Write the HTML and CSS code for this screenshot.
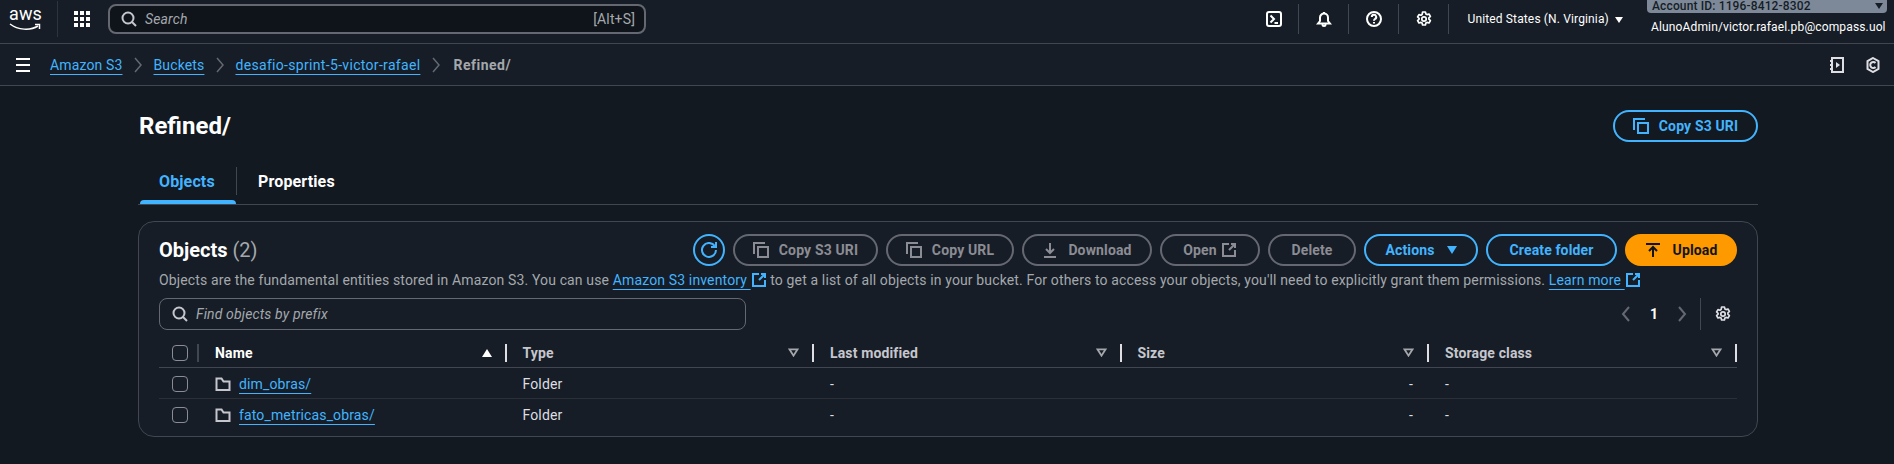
FILE: index.html
```html
<!DOCTYPE html>
<html lang="en">
<head>
  <meta charset="UTF-8">
  <title>Refined/ - S3 bucket</title>
  <link rel="stylesheet" href="styles.css">
</head>
<body>

<svg class="sprite" width="0" height="0">
  <symbol id="i-copy" viewBox="0 0 16 16"><path d="M1 12V1h11"/><rect x="5" y="5" width="10" height="10"/></symbol>
  <symbol id="i-ext" viewBox="0 0 16 16"><path d="M14 8v6H2V2h6"/><path d="M10 2h4v4M14 2L8 8"/></symbol>
  <symbol id="i-download" viewBox="0 0 16 16"><path d="M8 1v10M4 7l4 4 4-4M2 15h12"/></symbol>
  <symbol id="i-upload" viewBox="0 0 16 16"><path d="M1 2h14M8 15V5M4 9l4-4 4 4"/></symbol>
  <symbol id="i-refresh" viewBox="0 0 16 16"><path d="M10 5h5V0"/><path d="M15 8a7 7 0 1 1-1.300-4.100"/></symbol>
  <symbol id="i-gear" viewBox="0 0 16 16"><path d="M6.600 1h2.800l.5 2 1.100.6 2-.6 1.400 2.400-1.500 1.400v1.400l1.500 1.400-1.400 2.400-2-.6-1.100.6-.5 2H6.600l-.5-2-1.100-.6-2 .6-1.400-2.400 1.500-1.400V7.400L1.600 6 3 3.600l2 .6 1.100-.6z"/><circle cx="8" cy="8" r="2.200"/></symbol>
  <symbol id="i-folder" viewBox="0 0 16 16"><path d="M1.500 14V2.500h5l2 3h6V14z"/></symbol>
  <symbol id="i-chev" viewBox="0 0 16 16"><path d="M5 1l6 7-6 7"/></symbol>
  <symbol id="i-sort" viewBox="0 0 12 10"><path d="M1.500 1.500h9L6 8.500z"/></symbol>
</svg>

<header class="topbar">
  <div class="aws-logo">
    <span class="aws-word">aws</span>
    <svg class="aws-smile" viewBox="0 0 32 9"><path d="M1 1c8 6 20 7 28 2"/><path d="M26 1.500h4.500V6"/></svg>
  </div>
  <div class="apps-grid">
    <i></i><i></i><i></i><i></i><i></i><i></i><i></i><i></i><i></i>
  </div>
  <div class="search-box">
    <svg class="icon search-icon" viewBox="0 0 16 16"><circle cx="7" cy="7" r="5.500"/><path d="M15 15l-4-4"/></svg>
    <span class="search-text">Search</span>
    <span class="search-key">[Alt+S]</span>
  </div>

  <div class="top-right">
    <div class="top-slot">
      <svg class="icon" viewBox="0 0 16 16"><rect x="1" y="1" width="14" height="14" rx="2"/><path d="M4.500 4.500L8 8l-3.500 3.500M8.500 12H12"/></svg>
    </div>
    <div class="top-slot">
      <svg class="icon" viewBox="0 0 16 16"><path d="M8 2.500a4 4 0 0 0-4 4V10l-2 2.500h12L12 10V6.500a4 4 0 0 0-4-4zM8 1v1.500M6.500 13v.500a1.500 1.500 0 0 0 3 0V13"/></svg>
    </div>
    <div class="top-slot">
      <svg class="icon" viewBox="0 0 16 16"><circle cx="8" cy="8" r="7"/><path d="M5.800 6a2.200 2.200 0 1 1 3.300 1.900c-.7.400-1.100.9-1.100 1.900M8 11v1.500"/></svg>
    </div>
    <div class="top-slot">
      <svg class="icon icon-gear"><use href="#i-gear"/></svg>
    </div>
    <div class="region">United States (N. Virginia) <span class="caret-sm"></span></div>
    <div class="account">
      <div class="account-id">Account ID: 1196-8412-8302 <span class="caret-dark"></span></div>
      <div class="account-user">AlunoAdmin/victor.rafael.pb@compass.uol</div>
    </div>
  </div>
</header>

<nav class="crumbbar">
  <div class="hamburger"><i></i><i></i><i></i></div>
  <a class="crumb">Amazon S3</a>
  <svg class="icon crumb-sep"><use href="#i-chev"/></svg>
  <a class="crumb">Buckets</a>
  <svg class="icon crumb-sep"><use href="#i-chev"/></svg>
  <a class="crumb crumb-long">desafio-sprint-5-victor-rafael</a>
  <svg class="icon crumb-sep"><use href="#i-chev"/></svg>
  <span class="crumb-current">Refined/</span>
  <div class="crumb-tools">
    <svg class="icon" viewBox="0 0 16 16"><path d="M3 1h11v14H3zM1 4h3M1 8h3M1 12h3"/><path class="solid" d="M7 5l4 3-4 3z"/></svg>
    <svg class="icon" viewBox="0 0 16 16"><path d="M8 1l5.500 3.200v7.600L8 15l-5.500-3.200V4.200z"/><path d="M10.500 6A3 3 0 1 0 10.500 10"/></svg>
  </div>
</nav>

<main class="page">
  <div class="page-head">
    <h1>Refined/</h1>
    <button class="btn btn-blue head-copy"><svg class="icon"><use href="#i-copy"/></svg>Copy S3 URI</button>
  </div>

  <div class="tabs">
    <div class="tab tab-active"><span class="tab-label">Objects</span><span class="tab-bar"></span></div>
    <div class="tab tab-second"><span class="tab-label">Properties</span></div>
  </div>

  <section class="card">
    <div class="card-head">
      <h2>Objects <span class="count">(2)</span></h2>
      <div class="actions">
        <button class="btn btn-blue btn-round"><svg class="icon"><use href="#i-refresh"/></svg></button>
        <button class="btn btn-off w-copyuri"><svg class="icon"><use href="#i-copy"/></svg>Copy S3 URI</button>
        <button class="btn btn-off w-copyurl"><svg class="icon"><use href="#i-copy"/></svg>Copy URL</button>
        <button class="btn btn-off w-download"><svg class="icon"><use href="#i-download"/></svg>Download</button>
        <button class="btn btn-off w-open">Open<svg class="icon"><use href="#i-ext"/></svg></button>
        <button class="btn btn-off w-delete">Delete</button>
        <button class="btn btn-blue w-actions">Actions<span class="caret-blue"></span></button>
        <button class="btn btn-blue w-create">Create folder</button>
        <button class="btn btn-upload"><svg class="icon"><use href="#i-upload"/></svg>Upload</button>
      </div>
    </div>

    <p class="desc">Objects are the fundamental entities stored in Amazon S3. You can use <a>Amazon S3 inventory </a><svg class="icon ext-link"><use href="#i-ext"/></svg> to get a list of all objects in your bucket. For others to access your objects, you'll need to explicitly grant them permissions. <a>Learn more </a><svg class="icon ext-link"><use href="#i-ext"/></svg></p>

    <div class="filter-row">
      <div class="filter">
        <svg class="icon search-icon" viewBox="0 0 16 16"><circle cx="7" cy="7" r="5.500"/><path d="M15 15l-4-4"/></svg>
        <span>Find objects by prefix</span>
      </div>
      <div class="pager">
        <svg class="icon pager-chev flip"><use href="#i-chev"/></svg>
        <span class="pager-num">1</span>
        <svg class="icon pager-chev"><use href="#i-chev"/></svg>
        <span class="pager-div"></span>
        <svg class="icon pager-gear icon-gear"><use href="#i-gear"/></svg>
      </div>
    </div>

    <div class="table">
      <div class="tr th-row">
        <div class="td-check"><span class="checkbox"></span><span class="check-div"></span></div>
        <div class="th th-first">Name<span class="sort-up"></span></div>
        <div class="th">Type<svg class="sort-off"><use href="#i-sort"/></svg></div>
        <div class="th">Last modified<svg class="sort-off"><use href="#i-sort"/></svg></div>
        <div class="th">Size<svg class="sort-off"><use href="#i-sort"/></svg></div>
        <div class="th">Storage class<svg class="sort-off"><use href="#i-sort"/></svg></div>
      </div>
      <div class="tr row">
        <div class="td-check"><span class="checkbox"></span></div>
        <div class="td td-name"><svg class="icon folder"><use href="#i-folder"/></svg><a>dim_obras/</a></div>
        <div class="td">Folder</div>
        <div class="td">-</div>
        <div class="td td-size">-</div>
        <div class="td">-</div>
      </div>
      <div class="tr row">
        <div class="td-check"><span class="checkbox"></span></div>
        <div class="td td-name"><svg class="icon folder"><use href="#i-folder"/></svg><a>fato_metricas_obras/</a></div>
        <div class="td">Folder</div>
        <div class="td">-</div>
        <div class="td td-size">-</div>
        <div class="td">-</div>
      </div>
    </div>
  </section>
</main>

</body>
</html>
```

FILE: styles.css
```css
* {
  box-sizing: border-box;
}

body {
  margin: 0;
  height: 464px;
  overflow: hidden;
  background: #131920;
  color: #dedee3;
  font-family: Roboto, "Noto Sans", sans-serif;
  font-size: 14px;
  letter-spacing: 0.14px;
}

.sprite {
  position: absolute;
}

.icon {
  width: 16px;
  height: 16px;
  flex: none;
  fill: none;
  stroke: currentColor;
  stroke-width: 2;
}

.icon-gear {
  stroke-width: 1.700;
  stroke-linejoin: round;
}

.icon .solid {
  fill: currentColor;
  stroke: none;
}

a {
  color: #42b4ff;
  text-decoration: underline;
  text-underline-offset: 4px;
}

/* top bar */
.topbar {
  display: flex;
  align-items: center;
  height: 44px;
  background: #161d26;
  border-bottom: 1px solid #424650;
  color: #fff;
}

.aws-logo {
  width: 58px;
  height: 36px;
  margin-top: -6px;
  padding-left: 9px;
  border-right: 1px solid #2f343c;
}

.aws-word {
  display: block;
  font-size: 18px;
  line-height: 18px;
  margin-top: 4px;
}

.aws-smile {
  display: block;
  width: 32px;
  height: 9px;
  fill: none;
  stroke: #fff;
  stroke-width: 1.500;
}

.apps-grid {
  display: grid;
  grid-template-columns: repeat(3, 4px);
  gap: 2px;
  margin-left: 16px;
  margin-top: -6px;
}

.apps-grid i {
  width: 4px;
  height: 4px;
  background: #fff;
}

.search-box {
  display: flex;
  align-items: center;
  width: 538px;
  height: 30px;
  margin-left: 18px;
  margin-top: -6px;
  padding: 0 9px 0 11px;
  background: #0f141a;
  border: 2px solid #656871;
  border-radius: 8px;
  color: #a4a8ad;
}

.search-icon {
  color: #c6c6cd;
}

.search-text {
  margin-left: 8px;
  font-style: italic;
}

.search-key {
  margin-left: auto;
}

.top-right {
  display: flex;
  align-items: center;
  margin-left: auto;
  padding-right: 7px;
  height: 100%;
}

.top-slot {
  display: flex;
  align-items: center;
  justify-content: center;
  width: 50px;
  height: 30px;
  margin-top: -6px;
  border-right: 1px solid #424650;
}

.region {
  margin-left: 18px;
  margin-right: 24px;
  margin-top: -5px;
  font-size: 12px;
  white-space: nowrap;
}

.caret-sm {
  display: inline-block;
  border-left: 4px solid transparent;
  border-right: 4px solid transparent;
  border-top: 6px solid #fff;
  margin-left: 3px;
}

.account {
  width: 240px;
  height: 100%;
}

.account-id {
  display: flex;
  justify-content: space-between;
  align-items: center;
  height: 13px;
  padding: 0 4px 2px 5px;
  background: #7d8998;
  border-radius: 0 0 4px 4px;
  color: #161d26;
  font-size: 12px;
  font-weight: 500;
}

.caret-dark {
  border-left: 4px solid transparent;
  border-right: 4px solid transparent;
  border-top: 6px solid #161d26;
}

.account-user {
  margin-top: 6px;
  padding-left: 4px;
  font-size: 12px;
  line-height: 16px;
  white-space: nowrap;
}

/* breadcrumbs */
.crumbbar {
  display: flex;
  align-items: center;
  height: 42px;
  padding: 0 13px 0 16px;
  background: #161d26;
  border-bottom: 1px solid #424650;
}

.hamburger {
  display: flex;
  flex-direction: column;
  gap: 4px;
  width: 14px;
  margin-right: 20px;
}

.hamburger i {
  height: 2px;
  background: #fff;
}

.crumb {
  color: #42b4ff;
  text-decoration: underline;
  text-underline-offset: 4px;
  white-space: nowrap;
}

.crumb-long {
  letter-spacing: 0.320px;
}

.crumb-sep {
  margin: 0 7.500px;
  color: #656871;
  stroke-width: 1.500;
}

.crumb-current {
  margin-left: 2px;
  color: #a4a8ad;
  font-weight: 700;
  letter-spacing: 0.500px;
}

.crumb-tools {
  display: flex;
  gap: 20px;
  margin-left: auto;
  color: #dedee3;
}

/* page */
.page {
  padding: 24px 136px 0 138px;
}

.page-head {
  display: flex;
  justify-content: space-between;
  align-items: center;
  height: 32px;
}

h1 {
  margin: 0 0 0 1px;
  color: #fff;
  font-size: 24px;
  font-weight: 700;
  letter-spacing: 0;
}

.btn {
  display: flex;
  align-items: center;
  justify-content: center;
  gap: 10px;
  height: 32px;
  padding: 0;
  background: none;
  border: 2px solid;
  border-radius: 20px;
  font: inherit;
  font-weight: 700;
  letter-spacing: inherit;
  white-space: nowrap;
}

.btn-blue {
  border-color: #42b4ff;
  color: #42b4ff;
}

.btn-off {
  border-color: #656871;
  color: #8c8c94;
}

.btn-upload {
  width: 112px;
  gap: 12px;
  background: #ff9900;
  border-color: #ff9900;
  color: #0f141a;
}

.btn-round {
  width: 32px;
  border-radius: 50%;
}

.head-copy { width: 145px; }
.w-copyuri { width: 145px; }
.w-copyurl { width: 128px; }
.w-download { width: 130px; }
.w-open { width: 100px; gap: 4px; }
.w-delete { width: 88px; }
.w-actions { width: 114px; gap: 12px; }
.w-create { width: 131px; }

.caret-blue {
  border-left: 5px solid transparent;
  border-right: 5px solid transparent;
  border-top: 8px solid #42b4ff;
}

/* tabs */
.tabs {
  display: flex;
  height: 47px;
  margin-top: 16px;
  border-bottom: 1px solid #424650;
}

.tab {
  padding-top: 9px;
}

.tab-label {
  display: flex;
  align-items: center;
  height: 28px;
  font-size: 16px;
  font-weight: 700;
  color: #fff;
}

.tab-active {
  width: 97px;
  margin-left: 2px;
}

.tab-active .tab-label {
  padding-left: 19px;
  color: #42b4ff;
  border-right: 1px solid #424650;
}

.tab-second .tab-label {
  padding-left: 21px;
}

.tab-bar {
  display: block;
  width: 96px;
  height: 4px;
  margin-top: 5px;
  background: #42b4ff;
  border-radius: 4px 4px 0 0;
}

/* card */
.card {
  height: 216px;
  margin-top: 16px;
  padding: 0 20px;
  background: #161d26;
  border: 1px solid #424650;
  border-radius: 16px;
}

.card-head {
  display: flex;
  justify-content: space-between;
  align-items: center;
  height: 32px;
  margin-top: 12px;
}

h2 {
  margin: 0;
  color: #fff;
  font-size: 20px;
  font-weight: 700;
  letter-spacing: 0;
}

.count {
  color: #a4a8ad;
  font-weight: 400;
}

.actions {
  display: flex;
  gap: 8px;
}

.desc {
  margin: 4px 0 0;
  color: #a4a8ad;
  line-height: 20px;
  white-space: nowrap;
}

.ext-link {
  color: #42b4ff;
  vertical-align: -3px;
}

.filter-row {
  display: flex;
  justify-content: space-between;
  align-items: center;
  margin-top: 8px;
}

.filter {
  display: flex;
  align-items: center;
  gap: 8px;
  width: 587px;
  height: 32px;
  padding: 0 12px;
  border: 1px solid #656871;
  border-radius: 8px;
  color: #a4a8ad;
  font-style: italic;
}

.pager {
  display: flex;
  align-items: center;
  padding-right: 6px;
}

.pager-chev {
  color: #656871;
}

.pager-chev.flip {
  transform: scaleX(-1);
}

.pager-num {
  width: 40px;
  text-align: center;
  color: #fff;
  font-weight: 700;
}

.pager-div {
  width: 1px;
  height: 32px;
  margin-left: 10px;
  margin-right: 14px;
  background: #424650;
}

.pager-gear {
  color: #dedee3;
}

/* table */
.table {
  margin-top: 13px;
}

.tr {
  display: grid;
  grid-template-columns: 40px repeat(5, 307.5px);
  align-items: center;
}

.th-row {
  height: 25px;
  padding-bottom: 5px;
  border-bottom: 1px solid #424650;
}

.row {
  height: 31px;
  padding-top: 2px;
  border-bottom: 1px solid #2b3038;
}

.row:last-child {
  padding-top: 0;
  border-bottom: none;
}

.td-check {
  display: flex;
  align-items: center;
  height: 18px;
  padding-left: 13px;
}

.checkbox {
  width: 16px;
  height: 16px;
  border: 1px solid #8c8c94;
  border-radius: 4px;
}

.check-div {
  width: 2px;
  height: 18px;
  margin-left: 9px;
  background: #424650;
}

.th {
  display: flex;
  justify-content: space-between;
  align-items: center;
  height: 18px;
  padding-left: 16px;
  padding-right: 13px;
  border-right: 2px solid #dedee3;
  color: #c6c6cd;
  font-weight: 700;
}

.th-first {
  color: #fff;
}

.sort-up {
  border-left: 5px solid transparent;
  border-right: 5px solid transparent;
  border-bottom: 8px solid #fff;
}

.sort-off {
  width: 11px;
  height: 9px;
  fill: none;
  stroke: #a4a8ad;
  stroke-width: 2;
}

.td {
  padding-left: 16px;
  color: #dedee3;
}

.td-name {
  display: flex;
  align-items: center;
  gap: 8px;
  padding-left: 16px;
}

.td-size {
  padding-right: 16px;
  text-align: right;
}

.folder {
  color: #c6c6cd;
}
```
